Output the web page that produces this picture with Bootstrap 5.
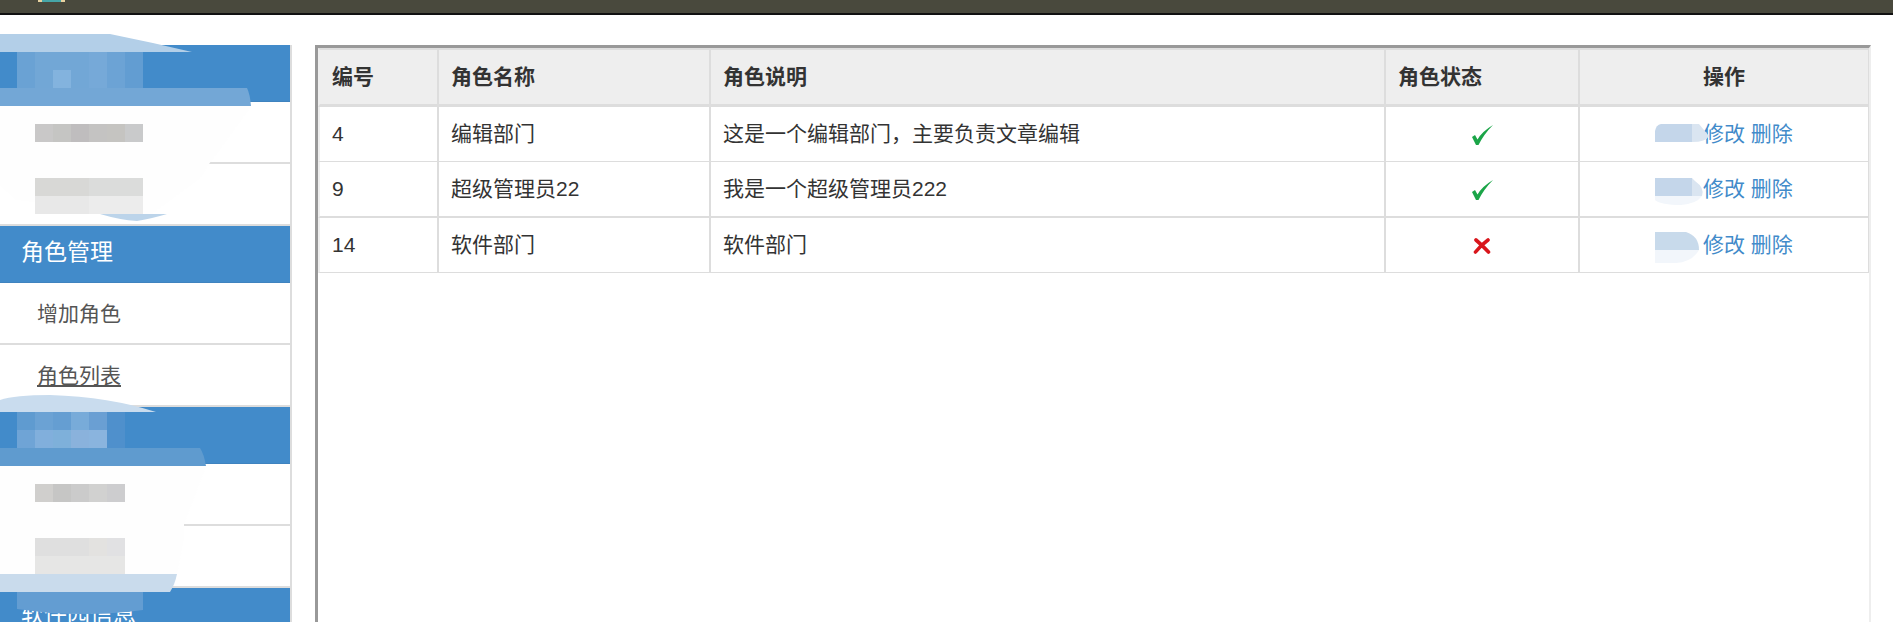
<!DOCTYPE html>
<html lang="zh-CN">
<head>
  <meta charset="UTF-8" />
  <title>角色列表</title>
  <link href="https://cdn.jsdelivr.net/npm/bootstrap@5.3.3/dist/css/bootstrap.min.css" rel="stylesheet">
  <style>
    html, body { height: 622px; overflow: hidden; }
    body {
      position: relative;
      background: #fff;
      color: #333;
      font-family: "Liberation Sans", "Noto Sans CJK SC", sans-serif;
      font-size: 21px;
    }
    .top-strip {
      height: 15px;
      padding-left: 38px;
      background: #49493d;
      border-bottom: 2px solid #111;
    }
    .top-logo {
      width: 27px;
      height: 2px;
      background: #46a6a8;
      border-left: 4px solid #e8d2a0;
      border-right: 4px solid #e8d2a0;
    }
    .page-wrap { height: 607px; padding-top: 30px; gap: 23px; }
    .side-menu { width: 292px; flex: none; border-right: 2px solid #ddd; height: 577px; overflow: hidden; }
    .menu-head {
      height: 57px;
      background: #428bca;
      border-bottom: 1px solid #3f83bf;
      color: #fff;
      font-size: 23px;
      line-height: 52px;
      padding-left: 21px;
    }
    .menu-row {
      height: 62px;
      line-height: 62px;
      padding-left: 37px;
      font-size: 21px;
      color: #555;
      border-bottom: 2px solid #ddd;
    }
    .menu-row a { color: #555; }
    .table-box {
      flex: 1;
      height: 577px;
      margin-right: 22px;
      border-top: 3px solid #999;
      border-left: 3px solid #999;
      border-right: 2px solid #eee;
    }
    .role-table { table-layout: fixed; width: 100%; margin: 0; border-collapse: separate; border-spacing: 0; }
    .role-table th, .role-table td {
      border-width: 0 2px 1px 0;
      border-style: solid;
      border-color: #ddd;
      padding: 0 12px;
      vertical-align: middle;
      font-size: 21px;
      color: #333;
      height: 55px;
    }
    .role-table th:first-child, .role-table td:first-child { border-left: 2px solid #eee; }
    .role-table th:last-child, .role-table td:last-child { border-right-width: 1px; }
    .role-table th {
      background: #eee;
      font-weight: 700;
      height: 59px;
      border-top-width: 2px;
      border-bottom-width: 3px;
    }
    .role-table tbody tr:nth-child(2) td { height: 56px; border-bottom-width: 2px; }
    .role-table td a { color: #428bca; text-decoration: none; }
    .op-hidden { display: inline-block; width: 42px; }
    .state-icon { display: block; margin: 0 auto; position: relative; top: 1px; }
    .redact-layer { position: absolute; left: 0; top: 0; pointer-events: none; }
  </style>
</head>
<body>
  <div class="top-strip d-flex"><div class="top-logo"></div></div>
  <div class="page-wrap d-flex">
    <div class="side-menu">
      <div class="menu-head"></div>
      <div class="menu-row"></div>
      <div class="menu-row"></div>
      <div class="menu-head">角色管理</div>
      <div class="menu-row">增加角色</div>
      <div class="menu-row"><a href="#">角色列表</a></div>
      <div class="menu-head"></div>
      <div class="menu-row"></div>
      <div class="menu-row"></div>
      <div class="menu-head">软件园信息</div>
    </div>
    <div class="table-box">
      <table class="table role-table">
        <colgroup>
          <col style="width:121px"><col style="width:272px"><col style="width:675px"><col style="width:194px"><col>
        </colgroup>
        <thead>
          <tr><th>编号</th><th>角色名称</th><th>角色说明</th><th>角色状态</th><th class="text-center">操作</th></tr>
        </thead>
        <tbody>
          <tr>
            <td>4</td><td>编辑部门</td><td>这是一个编辑部门，主要负责文章编辑</td>
            <td><svg class="state-icon" width="22" height="21" viewBox="0 0 22 21"><path d="M1 12 L4 10 L6.500 14.500 Q11 6.500 22 0 Q13 9 7.500 20 L5 20 Z" fill="#1ba548"/></svg></td>
            <td class="text-center"><span class="op-hidden"></span> <a href="#">修改</a> <a href="#">删除</a></td>
          </tr>
          <tr>
            <td>9</td><td>超级管理员22</td><td>我是一个超级管理员222</td>
            <td><svg class="state-icon" width="22" height="21" viewBox="0 0 22 21"><path d="M1 12 L4 10 L6.500 14.500 Q11 6.500 22 0 Q13 9 7.500 20 L5 20 Z" fill="#1ba548"/></svg></td>
            <td class="text-center"><span class="op-hidden"></span> <a href="#">修改</a> <a href="#">删除</a></td>
          </tr>
          <tr>
            <td>14</td><td>软件部门</td><td>软件部门</td>
            <td><svg class="state-icon" width="18" height="16" viewBox="0 0 18 16"><path d="M3 2 Q9 7 15.500 14 M15 2 Q8 7 2.500 14" fill="none" stroke="#d9161c" stroke-width="3.600" stroke-linecap="round"/></svg></td>
            <td class="text-center"><span class="op-hidden"></span> <a href="#">修改</a> <a href="#">删除</a></td>
          </tr>
        </tbody>
      </table>
    </div>
  </div>

  <!-- smudged areas of the screenshot, painted over the page -->
  <svg class="redact-layer" width="1893" height="622" viewBox="0 0 1893 622">
    <!-- first menu group -->
    <path d="M0 34 H110 Q150 42 192 52 H0 Z" fill="#b3cfe8"/>
    <rect x="17" y="52" width="18" height="36" fill="#6aa2d4"/>
    <rect x="35" y="52" width="54" height="36" fill="#72a7d6"/>
    <rect x="53" y="70" width="18" height="18" fill="#83b3de"/>
    <rect x="89" y="52" width="18" height="36" fill="#76a9d8"/>
    <rect x="107" y="52" width="18" height="36" fill="#6ca3d5"/>
    <rect x="125" y="52" width="18" height="36" fill="#629dd2"/>
    <path d="M0 88 H247 Q250 94 251 106 H0 Z" fill="#73a7d6"/>
    <path d="M0 106 H251 L209 164 L200 178 L150 215 L100 210 L17 200 L0 185 Z" fill="#fefefe"/>
    <rect x="35" y="124" width="18" height="18" fill="#c9c8c8"/>
    <rect x="53" y="124" width="18" height="18" fill="#c5c5c3"/>
    <rect x="71" y="124" width="18" height="18" fill="#bfbdbe"/>
    <rect x="89" y="124" width="18" height="18" fill="#c4c3c2"/>
    <rect x="107" y="124" width="18" height="18" fill="#c5c4c1"/>
    <rect x="125" y="124" width="18" height="18" fill="#c9cacb"/>
    <rect x="35" y="178" width="54" height="18" fill="#d8d8d6"/>
    <rect x="89" y="178" width="54" height="18" fill="#dbdcdb"/>
    <rect x="35" y="196" width="54" height="18" fill="#e8e8e8"/>
    <rect x="89" y="196" width="54" height="18" fill="#ececec"/>
    <path d="M100 214 H167 Q150 219 137 221 Q120 220 100 214 Z" fill="#bcd4ea"/>

    <!-- second menu group -->
    <path d="M0 400 Q15 395 50 395 Q110 397 156 412 H0 Z" fill="#c9dcee"/>
    <rect x="17" y="412" width="18" height="18" fill="#5f9bd0"/>
    <rect x="35" y="412" width="18" height="18" fill="#6ba2d4"/>
    <rect x="53" y="412" width="18" height="18" fill="#659ed2"/>
    <rect x="71" y="412" width="18" height="18" fill="#78abd9"/>
    <rect x="89" y="412" width="18" height="18" fill="#6a9fd3"/>
    <rect x="107" y="412" width="18" height="36" fill="#4f90cc"/>
    <rect x="17" y="430" width="18" height="18" fill="#6fa4d6"/>
    <rect x="35" y="430" width="18" height="18" fill="#81afdc"/>
    <rect x="53" y="430" width="18" height="18" fill="#7eb0da"/>
    <rect x="71" y="430" width="18" height="18" fill="#8ab2dc"/>
    <rect x="89" y="430" width="18" height="18" fill="#8ab4de"/>
    <path d="M0 448 H200 Q204 454 206 466 H0 Z" fill="#5f9bcf"/>
    <path d="M0 466 H206 L184 524 V538 L177 574 H0 Z" fill="#fefefe"/>
    <rect x="35" y="484" width="18" height="18" fill="#d0cfcd"/>
    <rect x="53" y="484" width="18" height="18" fill="#c6c6c5"/>
    <rect x="71" y="484" width="18" height="18" fill="#cbcbcb"/>
    <rect x="89" y="484" width="18" height="18" fill="#d1d1d0"/>
    <rect x="107" y="484" width="18" height="18" fill="#cdcdcf"/>
    <rect x="35" y="538" width="54" height="18" fill="#dfdfdf"/>
    <rect x="89" y="538" width="18" height="18" fill="#e3e2e0"/>
    <rect x="107" y="538" width="18" height="18" fill="#e1e1e3"/>
    <rect x="35" y="556" width="90" height="18" fill="#e6e6e5"/>
    <path d="M0 574 H177 Q175 584 170 592 H0 Z" fill="#c9dbec"/>
    <path d="M17 592 H143 V610 Q100 616 50 613 L17 609 Z" fill="#639dd2"/>

    <!-- smudges in front of the operation links -->
    <path d="M1661 124 H1692 V142 H1655 V131 Q1656 125 1661 124 Z" fill="#c4d6ea"/>
    <path d="M1692 124 H1699 L1709 136 Q1706 142 1692 142 Z" fill="#dae5f1"/>
    <rect x="1655" y="178" width="37" height="18" fill="#c4d6ea"/>
    <path d="M1692 178 L1695 181 Q1705 188 1702 196 H1692 Z" fill="#dae5f1"/>
    <path d="M1655 196 H1702 Q1696 204 1681 205 Q1661 205 1655 200 Z" fill="#f2f6fb"/>
    <path d="M1655 232 H1686 Q1699 236 1699 250 H1655 Z" fill="#c8daeb"/>
    <path d="M1655 250 H1699 Q1692 262 1676 263 H1655 Z" fill="#f2f6fb"/>
  </svg>
  <script src="https://cdn.jsdelivr.net/npm/bootstrap@5.3.3/dist/js/bootstrap.bundle.min.js"></script>
</body>
</html>
